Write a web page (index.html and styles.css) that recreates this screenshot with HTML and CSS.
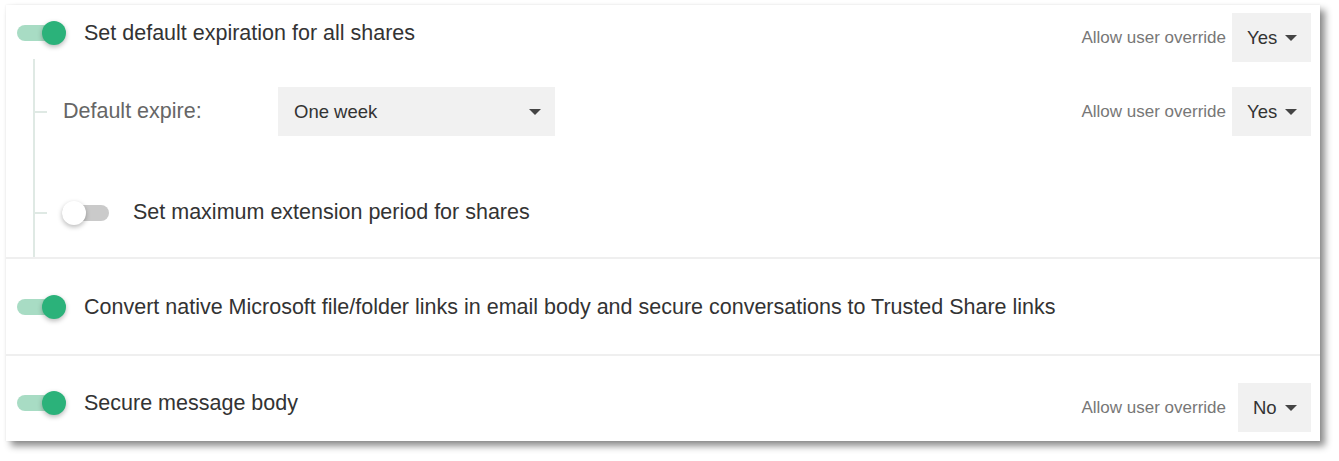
FILE: index.html
```html
<!DOCTYPE html>
<html lang="en">
<head>
    <meta charset="UTF-8">
    <meta name="viewport" content="width=device-width, initial-scale=1.0">
    <title>Share Settings</title>
    <link rel="stylesheet" href="styles.css">
</head>
<body>
    <div class="card">
        <div class="section section-first">
            <div class="row">
                <div class="setting">
                    <span class="toggle on"></span>
                    <span class="setting-label">Set default expiration for all shares</span>
                </div>
                <div class="override">
                    <span class="override-label">Allow user override</span>
                    <div class="select select-small"><span>Yes</span><i class="caret"></i></div>
                </div>
            </div>

            <div class="nested">
                <div class="row nested-row">
                    <span class="tick"></span>
                    <span class="field-label">Default expire:</span>
                    <div class="select select-wide"><span>One week</span><i class="caret"></i></div>
                    <div class="override">
                        <span class="override-label">Allow user override</span>
                        <div class="select select-small"><span>Yes</span><i class="caret"></i></div>
                    </div>
                </div>
                <div class="row nested-row nested-gap">
                    <span class="tick"></span>
                    <span class="toggle off"></span>
                    <span class="setting-label off-label">Set maximum extension period for shares</span>
                </div>
            </div>
        </div>

        <div class="section section-middle">
            <div class="row">
                <div class="setting">
                    <span class="toggle on"></span>
                    <span class="setting-label">Convert native Microsoft file/folder links in email body and secure conversations to Trusted Share links</span>
                </div>
            </div>
        </div>

        <div class="section section-last">
            <div class="row">
                <div class="setting">
                    <span class="toggle on"></span>
                    <span class="setting-label">Secure message body</span>
                </div>
                <div class="override override-no">
                    <span class="override-label">Allow user override</span>
                    <div class="select select-no"><span>No</span><i class="caret"></i></div>
                </div>
            </div>
        </div>
    </div>
</body>
</html>
```

FILE: styles.css
```css
body {
    margin: 0;
    padding-bottom: 20px;
    background: #fff;
    font-family: 'Liberation Sans', Arial, sans-serif;
    color: #333;
}

.card {
    margin: 5px 0 0 6px;
    width: 1314px;
    background: #fff;
    box-shadow: 0 0 2px rgba(0, 0, 0, 0.08), 5px 5px 7px rgba(0, 0, 0, 0.45);
}

.section {
    padding: 0 9px 0 11px;
    border-bottom: 2px solid #efefef;
}

.section-first {
    padding-top: 8px;
    padding-bottom: 0;
}

.section-middle {
    padding-top: 28px;
    padding-bottom: 18px;
}

.section-last {
    padding-top: 27px;
    padding-bottom: 9px;
    border-bottom: none;
}

.row {
    display: flex;
    align-items: center;
    min-height: 49px;
}

.setting {
    display: flex;
    align-items: center;
    margin-bottom: 9px;
}

.setting-label {
    font-size: 21.5px;
    margin-left: 18px;
    white-space: nowrap;
}

/* toggles */
.toggle {
    display: inline-block;
    position: relative;
    width: 49px;
    height: 24px;
    flex: none;
}

.toggle::before {
    content: "";
    position: absolute;
    left: 0;
    right: 1px;
    top: 4px;
    height: 16px;
    border-radius: 8px;
    background: #a8dcc4;
}

.toggle::after {
    content: "";
    position: absolute;
    top: 0;
    width: 24px;
    height: 24px;
    border-radius: 50%;
    box-shadow: 0 2px 5px rgba(0, 0, 0, 0.28);
}

.toggle.on::after {
    right: 0;
    background: #2bb27a;
}

.toggle.off {
    width: 47px;
    margin-left: 15px;
}

.toggle.off::before {
    right: 0;
    background: #cacaca;
}

.toggle.off::after {
    left: 0;
    background: #fff;
}

/* override selects */
.override {
    display: flex;
    align-items: center;
    margin-left: auto;
}

.override-label {
    font-size: 17px;
    color: #777;
    margin-right: 6px;
}

.override-no .override-label {
    margin-right: 12px;
}

.select {
    display: flex;
    align-items: center;
    height: 49px;
    box-sizing: border-box;
    background: #f1f1f1;
    font-size: 18.5px;
    color: #333;
    padding: 0 14px 0 15px;
}

.select-small {
    width: 79px;
}

.select-no {
    width: 73px;
}

.select-wide {
    width: 277px;
    padding-left: 16px;
}

.caret {
    width: 0;
    height: 0;
    margin-left: auto;
    border-left: 6px solid transparent;
    border-right: 6px solid transparent;
    border-top: 6px solid #444;
}

/* nested tree */
.nested {
    margin: -3px 0 0 16px;
    padding: 28px 0 20px 0;
    border-left: 2px solid #dfe9e4;
}

.nested-gap {
    margin-top: 52px;
}

.tick {
    width: 12px;
    height: 2px;
    background: #dfe9e4;
    flex: none;
}

.field-label {
    font-size: 21.5px;
    color: #666;
    margin-left: 16px;
    width: 215px;
}

.off-label {
    margin-left: 24px;
}
```
